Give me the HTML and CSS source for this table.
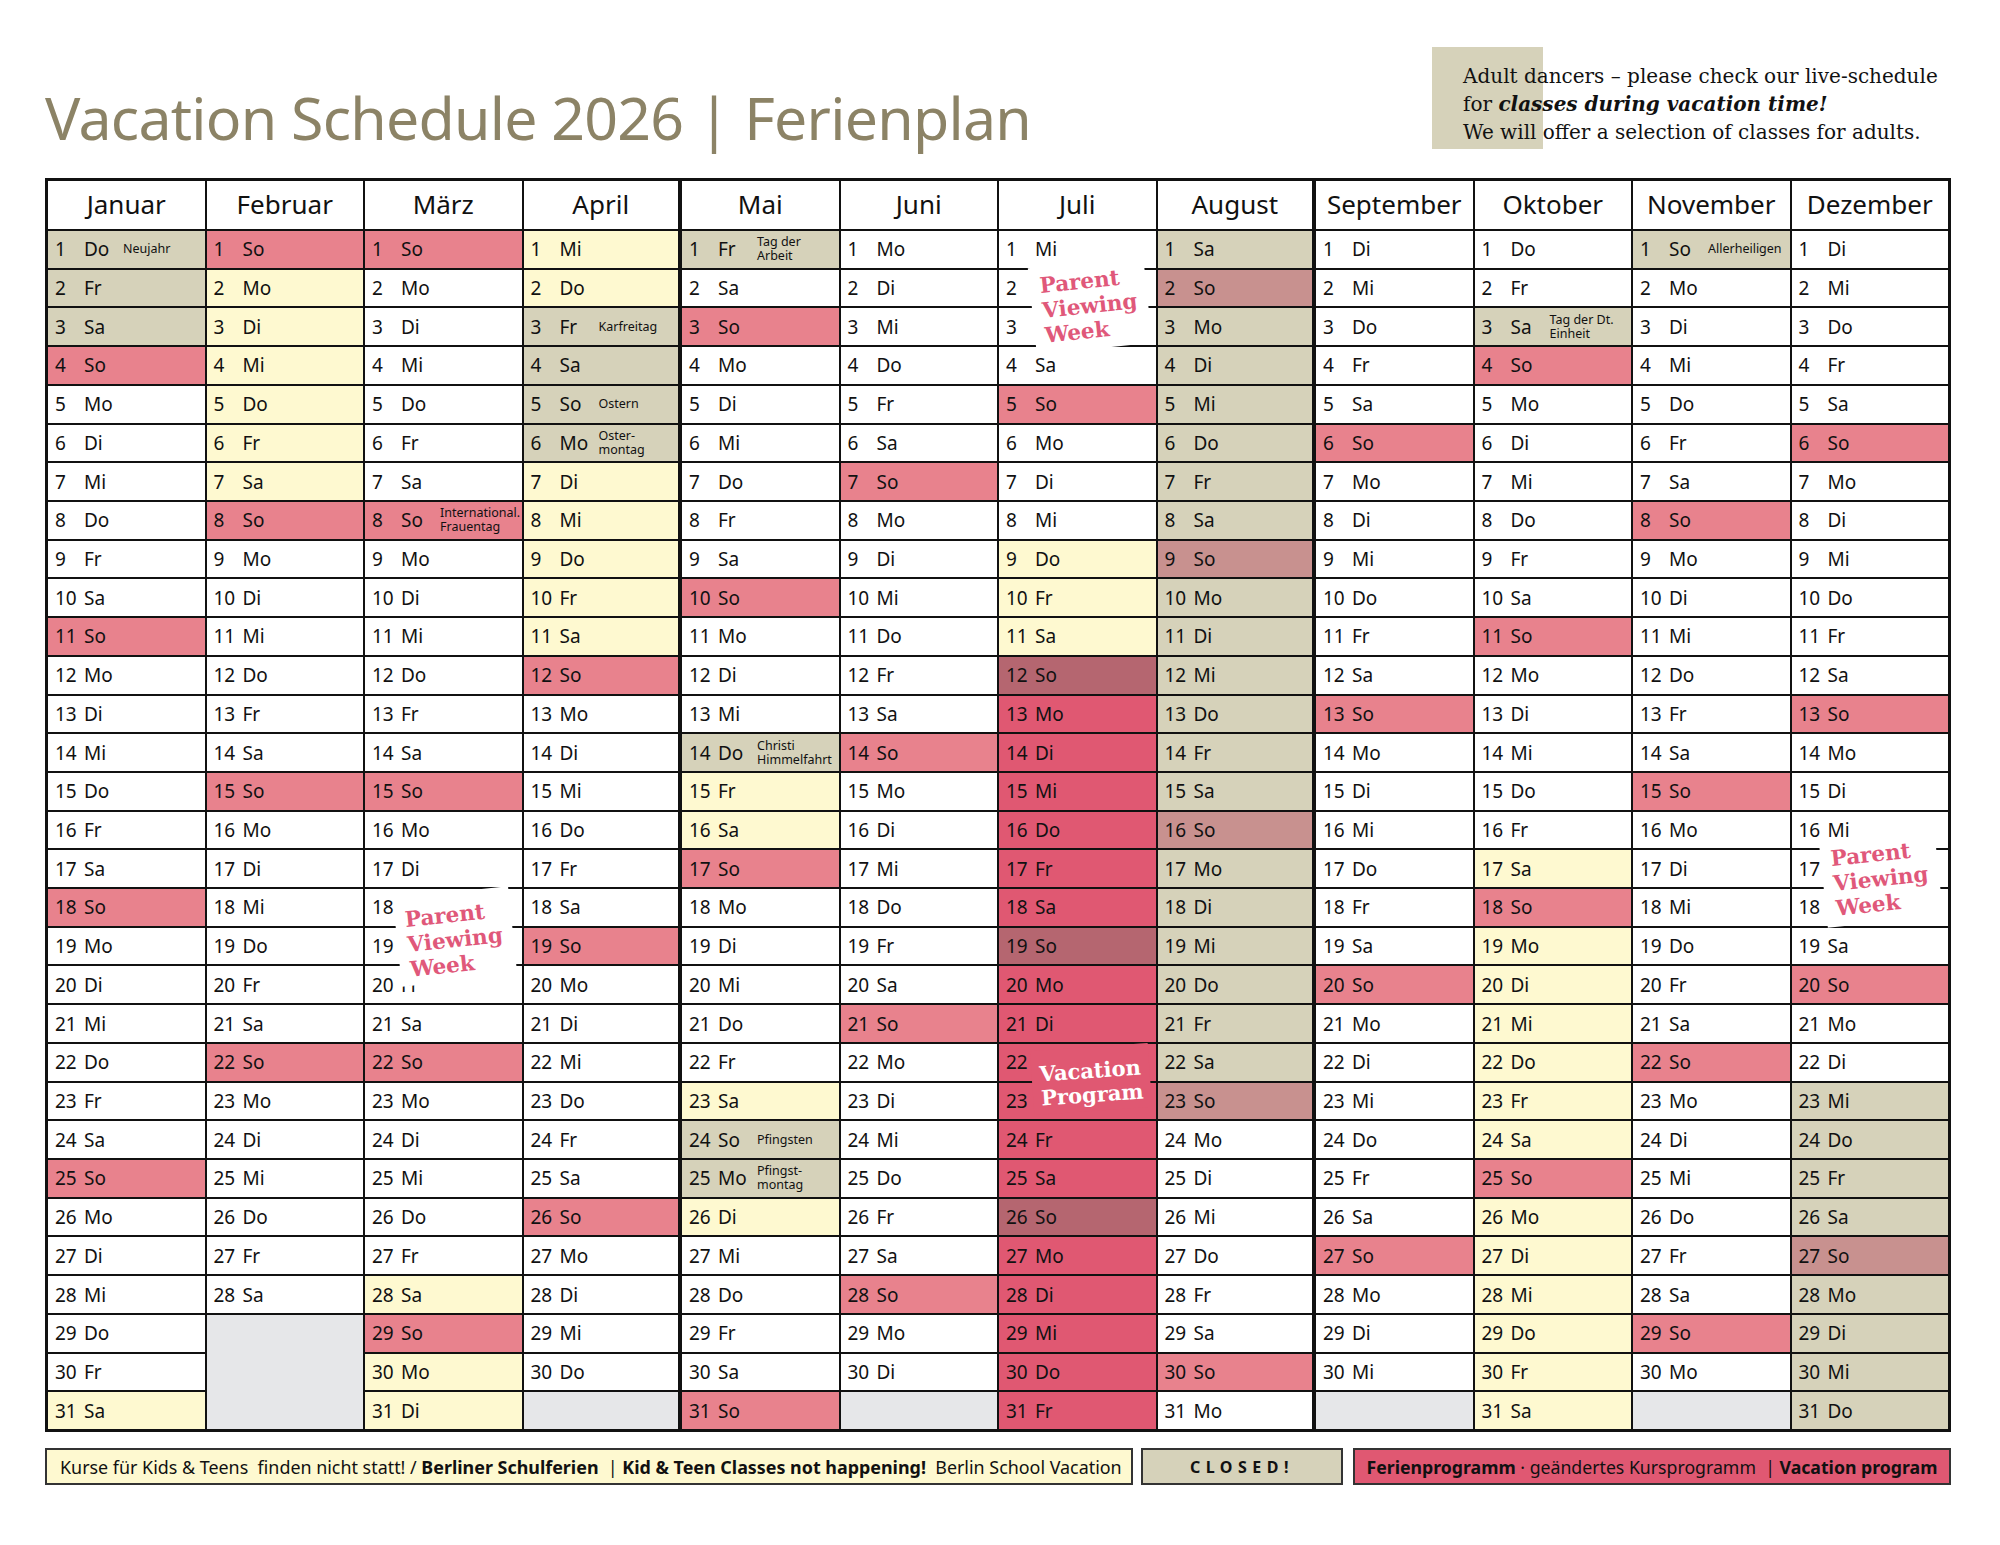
FILE: index.html
```html
<!DOCTYPE html>
<html lang="de">
<head>
<meta charset="utf-8">
<title>Vacation Schedule 2026 | Ferienplan</title>
<link rel="stylesheet" href="styles.css">
</head>
<body>
<div class="page">
  <header class="top">
    <h1 class="title">Vacation Schedule 2026 | Ferienplan</h1>
    <div class="note">Adult dancers – please check our live-schedule<br>for <b><i>classes during vacation time!</i></b><br>We will offer a selection of classes for adults.</div>
  </header>

  <div class="calendar">
    <div class="month">
      <div class="h">Januar</div>
      <div class="d k"><span>1</span><b>Do</b><small>Neujahr</small></div>
      <div class="d k"><span>2</span>Fr</div>
      <div class="d k"><span>3</span>Sa</div>
      <div class="d p"><span>4</span>So</div>
      <div class="d"><span>5</span>Mo</div>
      <div class="d"><span>6</span>Di</div>
      <div class="d"><span>7</span>Mi</div>
      <div class="d"><span>8</span>Do</div>
      <div class="d"><span>9</span>Fr</div>
      <div class="d"><span>10</span>Sa</div>
      <div class="d p"><span>11</span>So</div>
      <div class="d"><span>12</span>Mo</div>
      <div class="d"><span>13</span>Di</div>
      <div class="d"><span>14</span>Mi</div>
      <div class="d"><span>15</span>Do</div>
      <div class="d"><span>16</span>Fr</div>
      <div class="d"><span>17</span>Sa</div>
      <div class="d p"><span>18</span>So</div>
      <div class="d"><span>19</span>Mo</div>
      <div class="d"><span>20</span>Di</div>
      <div class="d"><span>21</span>Mi</div>
      <div class="d"><span>22</span>Do</div>
      <div class="d"><span>23</span>Fr</div>
      <div class="d"><span>24</span>Sa</div>
      <div class="d p"><span>25</span>So</div>
      <div class="d"><span>26</span>Mo</div>
      <div class="d"><span>27</span>Di</div>
      <div class="d"><span>28</span>Mi</div>
      <div class="d"><span>29</span>Do</div>
      <div class="d"><span>30</span>Fr</div>
      <div class="d y"><span>31</span>Sa</div>
    </div>

    <div class="month">
      <div class="h">Februar</div>
      <div class="d p"><span>1</span>So</div>
      <div class="d y"><span>2</span>Mo</div>
      <div class="d y"><span>3</span>Di</div>
      <div class="d y"><span>4</span>Mi</div>
      <div class="d y"><span>5</span>Do</div>
      <div class="d y"><span>6</span>Fr</div>
      <div class="d y"><span>7</span>Sa</div>
      <div class="d p"><span>8</span>So</div>
      <div class="d"><span>9</span>Mo</div>
      <div class="d"><span>10</span>Di</div>
      <div class="d"><span>11</span>Mi</div>
      <div class="d"><span>12</span>Do</div>
      <div class="d"><span>13</span>Fr</div>
      <div class="d"><span>14</span>Sa</div>
      <div class="d p"><span>15</span>So</div>
      <div class="d"><span>16</span>Mo</div>
      <div class="d"><span>17</span>Di</div>
      <div class="d"><span>18</span>Mi</div>
      <div class="d"><span>19</span>Do</div>
      <div class="d"><span>20</span>Fr</div>
      <div class="d"><span>21</span>Sa</div>
      <div class="d p"><span>22</span>So</div>
      <div class="d"><span>23</span>Mo</div>
      <div class="d"><span>24</span>Di</div>
      <div class="d"><span>25</span>Mi</div>
      <div class="d"><span>26</span>Do</div>
      <div class="d"><span>27</span>Fr</div>
      <div class="d"><span>28</span>Sa</div>
      <div class="x x3"></div>
    </div>

    <div class="month">
      <div class="h">März</div>
      <div class="d p"><span>1</span>So</div>
      <div class="d"><span>2</span>Mo</div>
      <div class="d"><span>3</span>Di</div>
      <div class="d"><span>4</span>Mi</div>
      <div class="d"><span>5</span>Do</div>
      <div class="d"><span>6</span>Fr</div>
      <div class="d"><span>7</span>Sa</div>
      <div class="d p"><span>8</span><b>So</b><small>International.<br>Frauentag</small></div>
      <div class="d"><span>9</span>Mo</div>
      <div class="d"><span>10</span>Di</div>
      <div class="d"><span>11</span>Mi</div>
      <div class="d"><span>12</span>Do</div>
      <div class="d"><span>13</span>Fr</div>
      <div class="d"><span>14</span>Sa</div>
      <div class="d p"><span>15</span>So</div>
      <div class="d"><span>16</span>Mo</div>
      <div class="d"><span>17</span>Di</div>
      <div class="d"><span>18</span>Mi</div>
      <div class="d"><span>19</span>Do</div>
      <div class="d"><span>20</span>Fr</div>
      <div class="d"><span>21</span>Sa</div>
      <div class="d p"><span>22</span>So</div>
      <div class="d"><span>23</span>Mo</div>
      <div class="d"><span>24</span>Di</div>
      <div class="d"><span>25</span>Mi</div>
      <div class="d"><span>26</span>Do</div>
      <div class="d"><span>27</span>Fr</div>
      <div class="d y"><span>28</span>Sa</div>
      <div class="d p"><span>29</span>So</div>
      <div class="d y"><span>30</span>Mo</div>
      <div class="d y"><span>31</span>Di</div>
    </div>

    <div class="month thick">
      <div class="h">April</div>
      <div class="d y"><span>1</span>Mi</div>
      <div class="d y"><span>2</span>Do</div>
      <div class="d k"><span>3</span><b>Fr</b><small>Karfreitag</small></div>
      <div class="d k"><span>4</span>Sa</div>
      <div class="d k"><span>5</span><b>So</b><small>Ostern</small></div>
      <div class="d k"><span>6</span><b>Mo</b><small>Oster-<br>montag</small></div>
      <div class="d y"><span>7</span>Di</div>
      <div class="d y"><span>8</span>Mi</div>
      <div class="d y"><span>9</span>Do</div>
      <div class="d y"><span>10</span>Fr</div>
      <div class="d y"><span>11</span>Sa</div>
      <div class="d p"><span>12</span>So</div>
      <div class="d"><span>13</span>Mo</div>
      <div class="d"><span>14</span>Di</div>
      <div class="d"><span>15</span>Mi</div>
      <div class="d"><span>16</span>Do</div>
      <div class="d"><span>17</span>Fr</div>
      <div class="d"><span>18</span>Sa</div>
      <div class="d p"><span>19</span>So</div>
      <div class="d"><span>20</span>Mo</div>
      <div class="d"><span>21</span>Di</div>
      <div class="d"><span>22</span>Mi</div>
      <div class="d"><span>23</span>Do</div>
      <div class="d"><span>24</span>Fr</div>
      <div class="d"><span>25</span>Sa</div>
      <div class="d p"><span>26</span>So</div>
      <div class="d"><span>27</span>Mo</div>
      <div class="d"><span>28</span>Di</div>
      <div class="d"><span>29</span>Mi</div>
      <div class="d"><span>30</span>Do</div>
      <div class="x"></div>
    </div>

    <div class="month">
      <div class="h">Mai</div>
      <div class="d k"><span>1</span><b>Fr</b><small>Tag der<br>Arbeit</small></div>
      <div class="d"><span>2</span>Sa</div>
      <div class="d p"><span>3</span>So</div>
      <div class="d"><span>4</span>Mo</div>
      <div class="d"><span>5</span>Di</div>
      <div class="d"><span>6</span>Mi</div>
      <div class="d"><span>7</span>Do</div>
      <div class="d"><span>8</span>Fr</div>
      <div class="d"><span>9</span>Sa</div>
      <div class="d p"><span>10</span>So</div>
      <div class="d"><span>11</span>Mo</div>
      <div class="d"><span>12</span>Di</div>
      <div class="d"><span>13</span>Mi</div>
      <div class="d k"><span>14</span><b>Do</b><small>Christi<br>Himmelfahrt</small></div>
      <div class="d y"><span>15</span>Fr</div>
      <div class="d y"><span>16</span>Sa</div>
      <div class="d p"><span>17</span>So</div>
      <div class="d"><span>18</span>Mo</div>
      <div class="d"><span>19</span>Di</div>
      <div class="d"><span>20</span>Mi</div>
      <div class="d"><span>21</span>Do</div>
      <div class="d"><span>22</span>Fr</div>
      <div class="d y"><span>23</span>Sa</div>
      <div class="d k"><span>24</span><b>So</b><small>Pfingsten</small></div>
      <div class="d k"><span>25</span><b>Mo</b><small>Pfingst-<br>montag</small></div>
      <div class="d y"><span>26</span>Di</div>
      <div class="d"><span>27</span>Mi</div>
      <div class="d"><span>28</span>Do</div>
      <div class="d"><span>29</span>Fr</div>
      <div class="d"><span>30</span>Sa</div>
      <div class="d p"><span>31</span>So</div>
    </div>

    <div class="month">
      <div class="h">Juni</div>
      <div class="d"><span>1</span>Mo</div>
      <div class="d"><span>2</span>Di</div>
      <div class="d"><span>3</span>Mi</div>
      <div class="d"><span>4</span>Do</div>
      <div class="d"><span>5</span>Fr</div>
      <div class="d"><span>6</span>Sa</div>
      <div class="d p"><span>7</span>So</div>
      <div class="d"><span>8</span>Mo</div>
      <div class="d"><span>9</span>Di</div>
      <div class="d"><span>10</span>Mi</div>
      <div class="d"><span>11</span>Do</div>
      <div class="d"><span>12</span>Fr</div>
      <div class="d"><span>13</span>Sa</div>
      <div class="d p"><span>14</span>So</div>
      <div class="d"><span>15</span>Mo</div>
      <div class="d"><span>16</span>Di</div>
      <div class="d"><span>17</span>Mi</div>
      <div class="d"><span>18</span>Do</div>
      <div class="d"><span>19</span>Fr</div>
      <div class="d"><span>20</span>Sa</div>
      <div class="d p"><span>21</span>So</div>
      <div class="d"><span>22</span>Mo</div>
      <div class="d"><span>23</span>Di</div>
      <div class="d"><span>24</span>Mi</div>
      <div class="d"><span>25</span>Do</div>
      <div class="d"><span>26</span>Fr</div>
      <div class="d"><span>27</span>Sa</div>
      <div class="d p"><span>28</span>So</div>
      <div class="d"><span>29</span>Mo</div>
      <div class="d"><span>30</span>Di</div>
      <div class="x"></div>
    </div>

    <div class="month">
      <div class="h">Juli</div>
      <div class="d"><span>1</span>Mi</div>
      <div class="d"><span>2</span>Do</div>
      <div class="d"><span>3</span>Fr</div>
      <div class="d"><span>4</span>Sa</div>
      <div class="d p"><span>5</span>So</div>
      <div class="d"><span>6</span>Mo</div>
      <div class="d"><span>7</span>Di</div>
      <div class="d"><span>8</span>Mi</div>
      <div class="d y"><span>9</span>Do</div>
      <div class="d y"><span>10</span>Fr</div>
      <div class="d y"><span>11</span>Sa</div>
      <div class="d m"><span>12</span>So</div>
      <div class="d r"><span>13</span>Mo</div>
      <div class="d r"><span>14</span>Di</div>
      <div class="d r"><span>15</span>Mi</div>
      <div class="d r"><span>16</span>Do</div>
      <div class="d r"><span>17</span>Fr</div>
      <div class="d r"><span>18</span>Sa</div>
      <div class="d m"><span>19</span>So</div>
      <div class="d r"><span>20</span>Mo</div>
      <div class="d r"><span>21</span>Di</div>
      <div class="d r"><span>22</span>Mi</div>
      <div class="d r"><span>23</span>Do</div>
      <div class="d r"><span>24</span>Fr</div>
      <div class="d r"><span>25</span>Sa</div>
      <div class="d m"><span>26</span>So</div>
      <div class="d r"><span>27</span>Mo</div>
      <div class="d r"><span>28</span>Di</div>
      <div class="d r"><span>29</span>Mi</div>
      <div class="d r"><span>30</span>Do</div>
      <div class="d r"><span>31</span>Fr</div>
    </div>

    <div class="month thick">
      <div class="h">August</div>
      <div class="d k"><span>1</span>Sa</div>
      <div class="d o"><span>2</span>So</div>
      <div class="d k"><span>3</span>Mo</div>
      <div class="d k"><span>4</span>Di</div>
      <div class="d k"><span>5</span>Mi</div>
      <div class="d k"><span>6</span>Do</div>
      <div class="d k"><span>7</span>Fr</div>
      <div class="d k"><span>8</span>Sa</div>
      <div class="d o"><span>9</span>So</div>
      <div class="d k"><span>10</span>Mo</div>
      <div class="d k"><span>11</span>Di</div>
      <div class="d k"><span>12</span>Mi</div>
      <div class="d k"><span>13</span>Do</div>
      <div class="d k"><span>14</span>Fr</div>
      <div class="d k"><span>15</span>Sa</div>
      <div class="d o"><span>16</span>So</div>
      <div class="d k"><span>17</span>Mo</div>
      <div class="d k"><span>18</span>Di</div>
      <div class="d k"><span>19</span>Mi</div>
      <div class="d k"><span>20</span>Do</div>
      <div class="d k"><span>21</span>Fr</div>
      <div class="d k"><span>22</span>Sa</div>
      <div class="d o"><span>23</span>So</div>
      <div class="d"><span>24</span>Mo</div>
      <div class="d"><span>25</span>Di</div>
      <div class="d"><span>26</span>Mi</div>
      <div class="d"><span>27</span>Do</div>
      <div class="d"><span>28</span>Fr</div>
      <div class="d"><span>29</span>Sa</div>
      <div class="d p"><span>30</span>So</div>
      <div class="d"><span>31</span>Mo</div>
    </div>

    <div class="month">
      <div class="h">September</div>
      <div class="d"><span>1</span>Di</div>
      <div class="d"><span>2</span>Mi</div>
      <div class="d"><span>3</span>Do</div>
      <div class="d"><span>4</span>Fr</div>
      <div class="d"><span>5</span>Sa</div>
      <div class="d p"><span>6</span>So</div>
      <div class="d"><span>7</span>Mo</div>
      <div class="d"><span>8</span>Di</div>
      <div class="d"><span>9</span>Mi</div>
      <div class="d"><span>10</span>Do</div>
      <div class="d"><span>11</span>Fr</div>
      <div class="d"><span>12</span>Sa</div>
      <div class="d p"><span>13</span>So</div>
      <div class="d"><span>14</span>Mo</div>
      <div class="d"><span>15</span>Di</div>
      <div class="d"><span>16</span>Mi</div>
      <div class="d"><span>17</span>Do</div>
      <div class="d"><span>18</span>Fr</div>
      <div class="d"><span>19</span>Sa</div>
      <div class="d p"><span>20</span>So</div>
      <div class="d"><span>21</span>Mo</div>
      <div class="d"><span>22</span>Di</div>
      <div class="d"><span>23</span>Mi</div>
      <div class="d"><span>24</span>Do</div>
      <div class="d"><span>25</span>Fr</div>
      <div class="d"><span>26</span>Sa</div>
      <div class="d p"><span>27</span>So</div>
      <div class="d"><span>28</span>Mo</div>
      <div class="d"><span>29</span>Di</div>
      <div class="d"><span>30</span>Mi</div>
      <div class="x"></div>
    </div>

    <div class="month">
      <div class="h">Oktober</div>
      <div class="d"><span>1</span>Do</div>
      <div class="d"><span>2</span>Fr</div>
      <div class="d k"><span>3</span><b>Sa</b><small>Tag der Dt.<br>Einheit</small></div>
      <div class="d p"><span>4</span>So</div>
      <div class="d"><span>5</span>Mo</div>
      <div class="d"><span>6</span>Di</div>
      <div class="d"><span>7</span>Mi</div>
      <div class="d"><span>8</span>Do</div>
      <div class="d"><span>9</span>Fr</div>
      <div class="d"><span>10</span>Sa</div>
      <div class="d p"><span>11</span>So</div>
      <div class="d"><span>12</span>Mo</div>
      <div class="d"><span>13</span>Di</div>
      <div class="d"><span>14</span>Mi</div>
      <div class="d"><span>15</span>Do</div>
      <div class="d"><span>16</span>Fr</div>
      <div class="d y"><span>17</span>Sa</div>
      <div class="d p"><span>18</span>So</div>
      <div class="d y"><span>19</span>Mo</div>
      <div class="d y"><span>20</span>Di</div>
      <div class="d y"><span>21</span>Mi</div>
      <div class="d y"><span>22</span>Do</div>
      <div class="d y"><span>23</span>Fr</div>
      <div class="d y"><span>24</span>Sa</div>
      <div class="d p"><span>25</span>So</div>
      <div class="d y"><span>26</span>Mo</div>
      <div class="d y"><span>27</span>Di</div>
      <div class="d y"><span>28</span>Mi</div>
      <div class="d y"><span>29</span>Do</div>
      <div class="d y"><span>30</span>Fr</div>
      <div class="d y"><span>31</span>Sa</div>
    </div>

    <div class="month">
      <div class="h">November</div>
      <div class="d k"><span>1</span><b>So</b><small>Allerheiligen</small></div>
      <div class="d"><span>2</span>Mo</div>
      <div class="d"><span>3</span>Di</div>
      <div class="d"><span>4</span>Mi</div>
      <div class="d"><span>5</span>Do</div>
      <div class="d"><span>6</span>Fr</div>
      <div class="d"><span>7</span>Sa</div>
      <div class="d p"><span>8</span>So</div>
      <div class="d"><span>9</span>Mo</div>
      <div class="d"><span>10</span>Di</div>
      <div class="d"><span>11</span>Mi</div>
      <div class="d"><span>12</span>Do</div>
      <div class="d"><span>13</span>Fr</div>
      <div class="d"><span>14</span>Sa</div>
      <div class="d p"><span>15</span>So</div>
      <div class="d"><span>16</span>Mo</div>
      <div class="d"><span>17</span>Di</div>
      <div class="d"><span>18</span>Mi</div>
      <div class="d"><span>19</span>Do</div>
      <div class="d"><span>20</span>Fr</div>
      <div class="d"><span>21</span>Sa</div>
      <div class="d p"><span>22</span>So</div>
      <div class="d"><span>23</span>Mo</div>
      <div class="d"><span>24</span>Di</div>
      <div class="d"><span>25</span>Mi</div>
      <div class="d"><span>26</span>Do</div>
      <div class="d"><span>27</span>Fr</div>
      <div class="d"><span>28</span>Sa</div>
      <div class="d p"><span>29</span>So</div>
      <div class="d"><span>30</span>Mo</div>
      <div class="x"></div>
    </div>

    <div class="month">
      <div class="h">Dezember</div>
      <div class="d"><span>1</span>Di</div>
      <div class="d"><span>2</span>Mi</div>
      <div class="d"><span>3</span>Do</div>
      <div class="d"><span>4</span>Fr</div>
      <div class="d"><span>5</span>Sa</div>
      <div class="d p"><span>6</span>So</div>
      <div class="d"><span>7</span>Mo</div>
      <div class="d"><span>8</span>Di</div>
      <div class="d"><span>9</span>Mi</div>
      <div class="d"><span>10</span>Do</div>
      <div class="d"><span>11</span>Fr</div>
      <div class="d"><span>12</span>Sa</div>
      <div class="d p"><span>13</span>So</div>
      <div class="d"><span>14</span>Mo</div>
      <div class="d"><span>15</span>Di</div>
      <div class="d"><span>16</span>Mi</div>
      <div class="d"><span>17</span>Do</div>
      <div class="d"><span>18</span>Fr</div>
      <div class="d"><span>19</span>Sa</div>
      <div class="d p"><span>20</span>So</div>
      <div class="d"><span>21</span>Mo</div>
      <div class="d"><span>22</span>Di</div>
      <div class="d k"><span>23</span>Mi</div>
      <div class="d k"><span>24</span>Do</div>
      <div class="d k"><span>25</span>Fr</div>
      <div class="d k"><span>26</span>Sa</div>
      <div class="d o"><span>27</span>So</div>
      <div class="d k"><span>28</span>Mo</div>
      <div class="d k"><span>29</span>Di</div>
      <div class="d k"><span>30</span>Mi</div>
      <div class="d k"><span>31</span>Do</div>
    </div>

    <div class="stamp pvw s-mar">Parent<br>Viewing<br>Week</div>
    <div class="stamp pvw s-jul">Parent<br>Viewing<br>Week</div>
    <div class="stamp pvw s-dez">Parent<br>Viewing<br>Week</div>
    <div class="stamp vp s-vp">Vacation<br>Program</div>
  </div>

  <div class="legend">
    <div class="lg lg-y">Kurse für Kids &amp; Teens  finden nicht statt! / <b>Berliner Schulferien</b>  | <b>Kid &amp; Teen Classes not happening!</b>  Berlin School Vacation</div>
    <div class="lg lg-k"><b>CLOSED!</b></div>
    <div class="lg lg-r"><b>Ferienprogramm</b> · geändertes Kursprogramm  | <b>Vacation program</b></div>
  </div>
</div>
</body>
</html>
```

FILE: styles.css
```css
body {
  margin: 0;
  background: #fff;
  color: #111;
  font-family: "Noto Sans", "Open Sans", sans-serif;
}

.page {
  width: 1906px;
  margin-left: 45px;
}

/* ---------- header ---------- */
.top {
  display: flex;
  justify-content: space-between;
  align-items: flex-start;
  height: 178px;
}

.title {
  margin: 0;
  padding-top: 88px;
  font-size: 59px;
  line-height: 1;
  font-weight: 400;
  letter-spacing: -0.75px;
  color: #8c8366;
  white-space: nowrap;
}

.note {
  position: relative;
  z-index: 0;
  width: 488px;
  margin-top: 62px;
  font-family: "DejaVu Serif", "Liberation Serif", serif;
  font-size: 20px;
  line-height: 28px;
  color: #111;
  white-space: nowrap;
}

.note::before {
  content: "";
  position: absolute;
  z-index: -1;
  left: -31px;
  top: -15px;
  width: 111px;
  height: 102px;
  background: #d6d2ba;
}

/* ---------- calendar ---------- */
.calendar {
  position: relative;
  display: grid;
  grid-template-columns: repeat(12, 1fr);
  column-gap: 2px;
  height: 1254px;
  box-sizing: border-box;
  border: 3px solid #111;
  background: #111;
}

.month {
  display: grid;
  grid-template-rows: 48px repeat(31, 1fr);
  row-gap: 2px;
  min-width: 0;
}

.month.thick {
  margin-right: 2px;
}

.h {
  display: flex;
  align-items: center;
  justify-content: center;
  padding-bottom: 3px;
  background: #fff;
  font-size: 26px;
  white-space: nowrap;
  overflow: hidden;
}

.d {
  display: flex;
  align-items: center;
  padding-left: 7px;
  background: #fff;
  font-size: 19px;
  white-space: nowrap;
  overflow: hidden;
}

.d span {
  flex: none;
  width: 29px;
}

.d b {
  flex: none;
  width: 39px;
  font-weight: 400;
}

.d small {
  font-size: 12.5px;
  line-height: 14px;
}

.x {
  background: #e6e7e9;
}

.x3 {
  grid-row: span 3;
}

.k { background: #d6d2ba; }
.p { background: #e8828d; }
.y { background: #fef9d0; }
.r { background: #e05872; }
.m { background: #b56670; }
.o { background: #c8918f; }

/* ---------- stamps over the grid ---------- */
.stamp {
  position: absolute;
  font-family: "DejaVu Serif", serif;
  font-weight: 700;
  font-size: 21.5px;
  line-height: 25px;
  padding: 6px 10px 6px 10px;
}

.pvw {
  background: #fff;
  color: #e0587a;
  transform: rotate(-6deg);
}

.vp {
  background: #e05872;
  color: #fff;
  transform: rotate(-4deg);
  padding: 12px 8px 4px 8px;
  font-size: 21px;
  line-height: 24px;
}

.s-mar { left: 349px; top: 711px; padding-top: 10px; padding-bottom: 4px; }
.s-jul { left: 984px; top: 81px; }
.s-dez { left: 1775px; top: 654px; }
.s-vp  { left: 984px; top: 866px; }

/* ---------- legend ---------- */
.legend {
  display: flex;
  margin-top: 16px;
  height: 37px;
}

.lg {
  box-sizing: border-box;
  display: flex;
  align-items: center;
  border: 2px solid #333;
  font-size: 17.7px;
  white-space: pre;
}

.lg b {
  font-weight: 700;
}

.lg-y {
  width: 1088px;
  margin-right: 8px;
  padding-left: 13px;
  background: #fef9d0;
  font-size: 17.9px;
}

.lg-k {
  width: 202px;
  margin-right: 10px;
  justify-content: center;
  background: #d6d2ba;
  font-size: 16px;
  letter-spacing: 5.5px;
}

.lg-r {
  flex: 1;
  justify-content: center;
  background: #e05872;
}
```
